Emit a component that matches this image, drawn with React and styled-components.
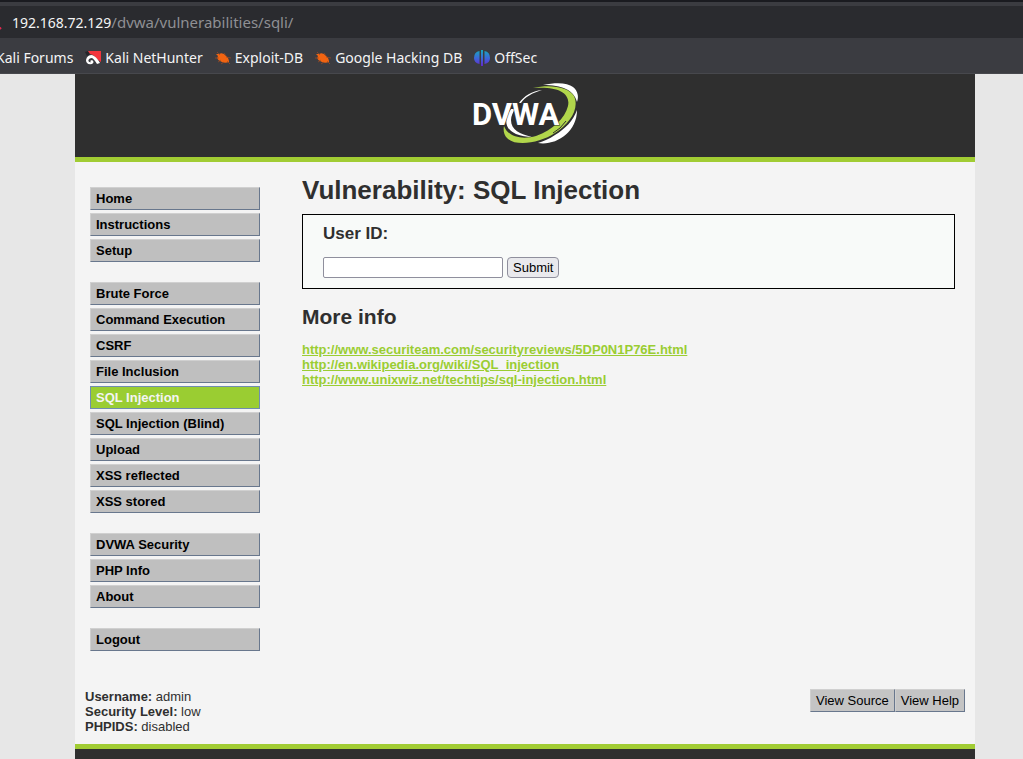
import React from "react";
import styled, { createGlobalStyle } from "styled-components";

const GlobalStyle = createGlobalStyle`
  * { box-sizing: border-box; }
  body {
    margin: 0;
    background: #e7e7e7;
    color: #2f2f2f;
    font: 13px/15px "Liberation Sans", Arial, sans-serif;
  }
`;

const Browser = styled.div`
  background: #3b3c41;
  border-bottom: 1px solid #47484d;
  border-top: 2px solid #1a1b20;
  color: #f4f4f5;
  font-family: "Noto Sans", sans-serif;
  overflow: hidden;
`;

const AddressBar = styled.div`
  display: flex;
  align-items: baseline;
  height: 32px;
  margin-top: 4px;
  background: #2a2b2f;
  font-size: 14px;
  line-height: 32px;

  svg { align-self: center; }
`;

const Path = styled.span`
  color: #8f9094;
  font-size: 15px;
`;

const Bookmarks = styled.nav`
  display: flex;
  align-items: center;
  gap: 12px;
  height: 35px;
  padding-top: 4px;
  margin-left: -4px;
  white-space: nowrap;
`;

const Bookmark = styled.a`
  display: flex;
  align-items: center;
  gap: 4px;
  color: inherit;
  font-size: 14px;
  line-height: 20px;
  text-decoration: none;
`;

const Page = styled.div`
  margin: 0 48px 0 75px;
  background: #f4f4f4;
`;

const Header = styled.header`
  display: flex;
  justify-content: center;
  padding: 8px 0 13px;
  background: #2f2f2f;
  border-bottom: 5px solid #a1cc33;

  svg { display: block; }
`;

const Columns = styled.div`
  display: flex;
  gap: 42px;
  padding: 0 20px 0 15px;
`;

const Menu = styled.nav`
  display: flex;
  flex-direction: column;
  flex: none;
  gap: 20px;
  width: 170px;
  padding-top: 25px;
`;

const MenuGroup = styled.ul`
  display: flex;
  flex-direction: column;
  gap: 3px;
  margin: 0;
  padding: 0;
  list-style: none;
`;

const MenuLink = styled.a`
  display: block;
  padding: 3px 5px;
  border: 1px solid;
  border-color: ${(p) => (p.$active ? "#708db0" : "#d0d0d0 #68778d #68778d #d0d0d0")};
  background: ${(p) => (p.$active ? "#9acd32" : "#bfbfbf")};
  color: ${(p) => (p.$active ? "#f4f4f4" : "#000")};
  font-weight: bold;
  text-decoration: none;
`;

const Main = styled.main`
  flex: 1;
  min-width: 0;
  padding-top: 13px;
`;

const Title = styled.h1`
  margin: 0 0 9px;
  font-size: 26px;
  line-height: 30px;
`;

const Panel = styled.form`
  padding: 9px 20px 10px;
  border: 1px solid #000;
  background: #f8faf9;
`;

const FieldLabel = styled.label`
  display: block;
  margin-bottom: 13px;
  font-size: 17px;
  font-weight: bold;
  line-height: 20px;
`;

const Controls = styled.div`
  display: flex;
  gap: 4px;
`;

const TextInput = styled.input`
  width: 180px;
  height: 21px;
  padding: 1px 2px;
  border: 1px solid #8f8f9d;
  border-radius: 2px;
  background: #fff;
  font: inherit;
`;

const SubmitButton = styled.button`
  height: 21px;
  padding: 0 5px;
  border: 1px solid #8f8f9d;
  border-radius: 4px;
  background: #e9e9ed;
  color: #000;
  font: inherit;
`;

const Subtitle = styled.h2`
  margin: 16px 0 13px;
  font-size: 21px;
  line-height: 24px;
`;

const Links = styled.ul`
  margin: 0;
  padding: 0;
  list-style: none;
`;

const InfoLink = styled.a`
  color: #9acd32;
  font-weight: bold;
`;

const Status = styled.section`
  display: flex;
  align-items: flex-start;
  justify-content: space-between;
  padding: 38px 10px 10px;
`;

const ViewButton = styled.button`
  height: 23px;
  padding: 0 5px;
  border: 1px solid;
  border-color: #d0d0d0 #68778d #68778d #d0d0d0;
  background: #c4c4c4;
  color: #000;
  font: inherit;
`;

const ViewButtons = styled.div`
  display: flex;
`;

const Footer = styled.footer`
  height: 15px;
  border-top: 5px solid #a1cc33;
  background: #2f2f2f;
`;

const InsecureMark = () => (
  <svg width="12" height="16" viewBox="0 0 12 16" aria-hidden="true">
    <path d="M-3 11L1 15" stroke="#e22850" strokeWidth="2" />
  </svg>
);

const HunterIcon = () => (
  <svg width="16" height="16" viewBox="0 0 16 16" aria-hidden="true">
    <path d="M0 2L3 1L5 4L2 6Z" fill="#24252a" />
    <path d="M3 1H16V12L12 9L8 5L5 4Z" fill="#f4343c" />
    <path d="M1 10Q2 5 7 5Q11 6 15 13L12 14Q9 9 7 8Q4 8 3 11Z" fill="#fff" />
    <path d="M1 10Q1 15 7 14Q10 12 7 10L5 11L6 12Q4 13 3 10Z" fill="#fff" />
  </svg>
);

const BugIcon = () => (
  <svg width="16" height="16" viewBox="0 0 16 16" aria-hidden="true">
    <path d="M1 4L4 4Q8 2 11 6Q14 8 14 12Q9 14 5 11Q1 9 3 6Z" fill="#f26411" />
    <path d="M2 2L5 5M9 3L11 6M0 8L4 8M3 12L6 10M6 14L9 12M11 7L16 8M12 11L15 14" stroke="#a64b20" strokeWidth=".7" fill="none" />
  </svg>
);

const OffSecIcon = () => (
  <svg width="16" height="16" viewBox="0 0 16 16" aria-hidden="true">
    <defs>
      <linearGradient id="offsec" x1="0" y1="0" x2="0" y2="1">
        <stop offset="0" stopColor="#16a9bd" />
        <stop offset=".5" stopColor="#3b69d8" />
        <stop offset="1" stopColor="#6526cf" />
      </linearGradient>
    </defs>
    <path d="M5.5 1V14Q0 13 0 8Q0 2 5.5 1ZM10.5 1V14Q16 13 16 8Q16 2 10.5 1ZM7 0H9V16H7Z" fill="url(#offsec)" />
  </svg>
);

const Logo = () => (
  <svg width="108" height="62" viewBox="0 0 108 62" role="img" aria-label="DVWA">
    <path d="M48 21C53 14 61 9 71 8C61 11 54 15 50 21Z" fill="#fff" />
    <path d="M72 3C86 0 97 1 102 5C107 9 108 15 106 20C103 8 91 3 72 3Z" fill="#fff" />
    <path d="M40 27C33 36 33 47 45 52C50 54 56 55 61 55C49 52 40 48 40 38C40 34 42 30 44 27Z" fill="#fff" />
    <path d="M106 28C102 39 94 47 84 53C78 57 73 59 67 61C84 64 106 51 106 28Z" fill="#fff" />
    <path d="M62 6C80 2 97 5 103 14C109 27 98 42 84 51C69 61 45 65 36 56C33 53 32 48 33 44C37 55 51 58 65 54C82 48 94 36 97 24C100 10 85 4 62 6Z" fill="#b1d64b" />
    <path d="M95 39L89 46L82 51" fill="none" stroke="#2f2f2f" strokeWidth="1" />
    <text x="1" y="43" fill="#fff" stroke="#2f2f2f" strokeWidth="1" paintOrder="stroke" fontFamily="Roboto, sans-serif" fontSize="31" fontWeight="700">DVWA</text>
  </svg>
);

const bookmarks = [
  { name: "Kali Forums" },
  { name: "Kali NetHunter", Icon: HunterIcon },
  { name: "Exploit-DB", Icon: BugIcon },
  { name: "Google Hacking DB", Icon: BugIcon },
  { name: "OffSec", Icon: OffSecIcon },
];

const menu = [
  ["Home", "Instructions", "Setup"],
  ["Brute Force", "Command Execution", "CSRF", "File Inclusion", "SQL Injection", "SQL Injection (Blind)", "Upload", "XSS reflected", "XSS stored"],
  ["DVWA Security", "PHP Info", "About"],
  ["Logout"],
];

const links = [
  "http://www.securiteam.com/securityreviews/5DP0N1P76E.html",
  "http://en.wikipedia.org/wiki/SQL_injection",
  "http://www.unixwiz.net/techtips/sql-injection.html",
];

export default function App() {
  return (
    <>
      <GlobalStyle />
      <Browser>
        <AddressBar><InsecureMark />192.168.72.129<Path>/dvwa/vulnerabilities/sqli/</Path></AddressBar>
        <Bookmarks>
          {bookmarks.map(({ name, Icon }) => (
            <Bookmark href="#" key={name}>{Icon && <Icon />}{name}</Bookmark>
          ))}
        </Bookmarks>
      </Browser>
      <Page>
        <Header><Logo /></Header>
        <Columns>
          <Menu>
            {menu.map((group) => (
              <MenuGroup key={group[0]}>
                {group.map((item) => (
                  <li key={item}><MenuLink href="#" $active={item === "SQL Injection"}>{item}</MenuLink></li>
                ))}
              </MenuGroup>
            ))}
          </Menu>
          <Main>
            <Title>Vulnerability: SQL Injection</Title>
            <Panel onSubmit={(e) => e.preventDefault()}>
              <FieldLabel htmlFor="user-id">User ID:</FieldLabel>
              <Controls>
                <TextInput id="user-id" type="text" name="id" />
                <SubmitButton type="submit">Submit</SubmitButton>
              </Controls>
            </Panel>
            <Subtitle>More info</Subtitle>
            <Links>
              {links.map((url) => <li key={url}><InfoLink href={url}>{url}</InfoLink></li>)}
            </Links>
          </Main>
        </Columns>
        <Status>
          <div>
            <div><b>Username:</b> admin</div>
            <div><b>Security Level:</b> low</div>
            <div><b>PHPIDS:</b> disabled</div>
          </div>
          <ViewButtons>
            <ViewButton type="button">View Source</ViewButton>
            <ViewButton type="button">View Help</ViewButton>
          </ViewButtons>
        </Status>
        <Footer />
      </Page>
    </>
  );
}
